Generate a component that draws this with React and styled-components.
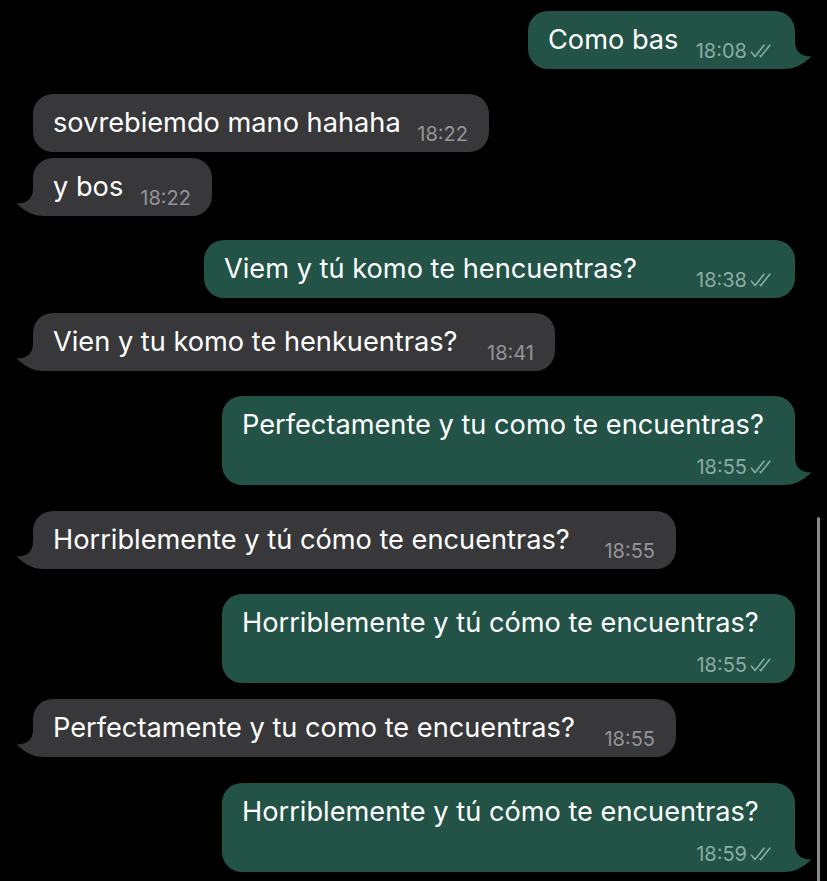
import React from "react";
import styled, { createGlobalStyle } from "styled-components";

const GlobalStyle = createGlobalStyle`
  html, body {
    margin: 0;
    padding: 0;
    background: #000;
  }
  body {
    font-family: Inter, "Noto Sans", sans-serif;
    -webkit-font-smoothing: antialiased;
  }
`;

const Screen = styled.div`
  position: relative;
  width: 827px;
  height: 881px;
  overflow: hidden;
  background: #000;
  display: flex;
  flex-direction: column;
  padding-top: 11px;
  box-sizing: border-box;
`;

const Row = styled.div`
  display: flex;
  justify-content: ${p => (p.$out ? "flex-end" : "flex-start")};
  padding: ${p => (p.$out ? "0 32px 0 0" : "0 0 0 33px")};
  margin-top: ${p => p.$gap}px;
`;

const Bubble = styled.div`
  position: relative;
  display: flex;
  flex-direction: ${p => (p.$stacked ? "column" : "row")};
  align-items: ${p => (p.$stacked ? "stretch" : "flex-end")};
  box-sizing: border-box;
  padding: 0 21px 0 20px;
  border-radius: 20px;
  background: ${p => (p.$out ? "#225346" : "#38383a")};
  color: #fff;
`;

const Text = styled.div`
  flex: 1;
  padding-top: 12px;
  padding-bottom: ${p => (p.$stacked ? 0 : 12)}px;
  font-size: 27.2px;
  line-height: 34px;
  white-space: nowrap;
`;

const Meta = styled.div`
  display: flex;
  align-items: center;
  align-self: flex-end;
  gap: 2px;
  margin-top: ${p => (p.$stacked ? 13 : 0)}px;
  padding-bottom: 6px;
  font-size: 20px;
  line-height: 24px;
  color: ${p => (p.$out ? "#8aaca2" : "#949498")};
`;

const Tail = styled.svg`
  position: absolute;
  bottom: 0;
  width: 40px;
  height: 32px;
  ${p => (p.$out ? "right: -18px;" : "left: -18px; transform: scaleX(-1);")}
  fill: ${p => (p.$out ? "#225346" : "#38383a")};
`;

const Scrollbar = styled.div`
  position: absolute;
  right: 7px;
  top: 517px;
  bottom: -10px;
  width: 3.5px;
  border-radius: 2px;
  background: #8a8a8e;
`;

function Checks() {
  return (
    <svg width="25" height="16" viewBox="0 0 25 16" fill="none" stroke="currentColor" strokeWidth="1.6" strokeLinecap="round" strokeLinejoin="round">
      <path d="M2.5 9.2 L6 13.6 L15 2.2" />
      <path d="M11 12.8 L11.8 13.6 L20.8 2.2" />
    </svg>
  );
}

const messages = [
  { out: true, text: "Como bas", time: "18:08", w: 267, gap: 0, tail: true },
  { out: false, text: "sovrebiemdo mano hahaha", time: "18:22", w: 456, gap: 25 },
  { out: false, text: "y bos", time: "18:22", w: 179, gap: 6, tail: true },
  { out: true, text: "Viem y tú komo te hencuentras?", time: "18:38", w: 591, gap: 24 },
  { out: false, text: "Vien y tu komo te henkuentras?", time: "18:41", w: 522, gap: 15, tail: true },
  { out: true, text: "Perfectamente y tu como te encuentras?", time: "18:55", w: 573, gap: 25, tail: true, stacked: true },
  { out: false, text: "Horriblemente y tú cómo te encuentras?", time: "18:55", w: 643, gap: 26, tail: true },
  { out: true, text: "Horriblemente y tú cómo te encuentras?", time: "18:55", w: 573, gap: 25, stacked: true },
  { out: false, text: "Perfectamente y tu como te encuentras?", time: "18:55", w: 643, gap: 16, tail: true },
  { out: true, text: "Horriblemente y tú cómo te encuentras?", time: "18:59", w: 573, gap: 26, tail: true, stacked: true },
];

function Message({ out, text, time, w, gap, tail, stacked }) {
  return (
    <Row $out={out} $gap={gap}>
      <Bubble $out={out} $stacked={stacked} style={{ width: w }}>
        {tail && (
          <Tail $out={out} viewBox="0 0 40 32">
            <path d="M22 4 C22 14 27 19.5 38.5 19.5 C35 22.5 29 28.5 19 31.2 C14 32.2 8 32 0 32 L0 4 Z" />
          </Tail>
        )}
        <Text $stacked={stacked}>{text}</Text>
        <Meta $out={out} $stacked={stacked}>
          <span>{time}</span>
          {out && <Checks />}
        </Meta>
      </Bubble>
    </Row>
  );
}

export default function App() {
  return (
    <Screen>
      <GlobalStyle />
      {messages.map((m, i) => (
        <Message key={i} {...m} />
      ))}
      <Scrollbar />
    </Screen>
  );
}
